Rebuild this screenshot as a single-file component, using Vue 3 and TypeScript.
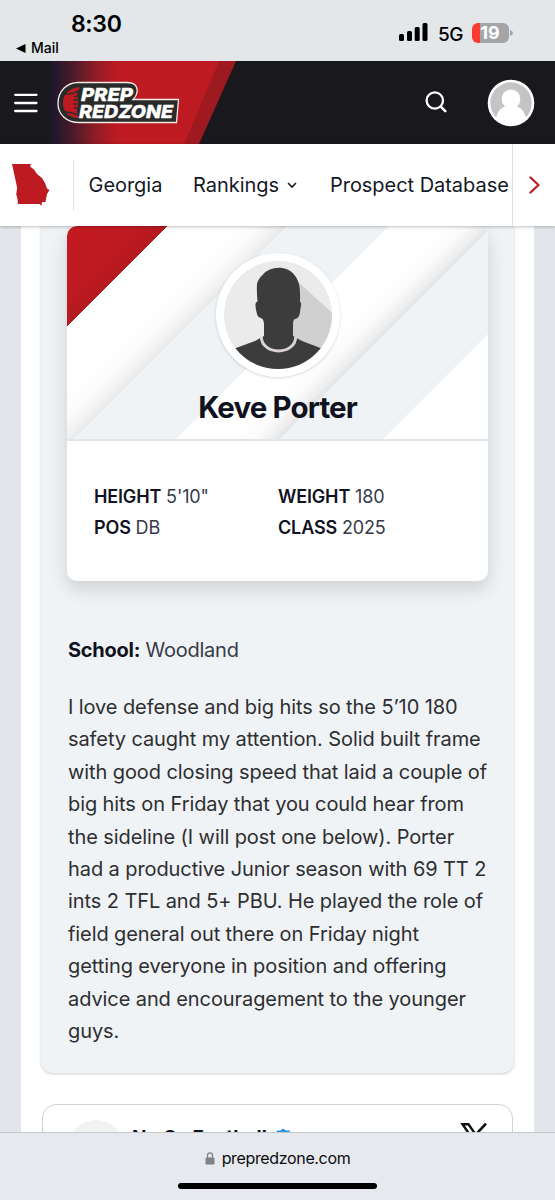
<script setup lang="ts">
interface Stat {
  label: string
  value: string
}

const stats: Stat[] = [
  { label: 'HEIGHT', value: '5\'10"' },
  { label: 'WEIGHT', value: '180' },
  { label: 'POS', value: 'DB' },
  { label: 'CLASS', value: '2025' },
]

const reportLines: string[] = [
  'I love defense and big hits so the 5’10 180',
  'safety caught my attention. Solid built frame',
  'with good closing speed that laid a couple of',
  'big hits on Friday that you could hear from',
  'the sideline (I will post one below). Porter',
  'had a productive Junior season with 69 TT 2',
  'ints 2 TFL and 5+ PBU. He played the role of',
  'field general out there on Friday night',
  'getting everyone in position and offering',
  'advice and encouragement to the younger',
  'guys.',
]
</script>

<template>
  <div class="phone">
    <div class="status">
      <div class="status-left">
        <div class="time">8:30</div>
        <div class="back">
          <svg width="10" height="9" viewBox="0 0 10 9"><path d="M9.500 0v9L0 4.500z" fill="#000" /></svg>
          <span>Mail</span>
        </div>
      </div>
      <div class="status-right">
        <svg class="signal" width="29" height="18" viewBox="0 0 29 18">
          <rect x="0" y="11" width="5" height="7" rx="1.500" />
          <rect x="8" y="8" width="5" height="10" rx="1.500" />
          <rect x="15.700" y="4" width="5" height="14" rx="1.500" />
          <rect x="23.500" y="0" width="5" height="18" rx="1.500" />
        </svg>
        <span class="net">5G</span>
        <div class="battery"><span>19</span></div>
        <svg class="cap" width="3" height="6" viewBox="0 0 3 6"><path d="M0 0Q3 1 3 3T0 6z" fill="#a3a5a8" /></svg>
      </div>
    </div>

    <header class="topbar">
      <svg class="topbar-art" width="240" height="83" viewBox="0 0 240 83">
        <defs>
          <linearGradient id="fade" x1="50" x2="118" y1="0" y2="0" gradientUnits="userSpaceOnUse">
            <stop offset="0" stop-color="#18172a" />
            <stop offset="0.300" stop-color="#461a2a" />
            <stop offset="0.700" stop-color="#951b25" />
            <stop offset="1" stop-color="#be1a21" />
          </linearGradient>
        </defs>
        <path d="M50 0H236L199 83H50z" fill="#9f1a20" />
        <path d="M50 0H219L184 83H50z" fill="url(#fade)" />
      </svg>
      <svg class="menu" width="24" height="20" viewBox="0 0 24 20">
        <path d="M1.200 1.800H22.500M1.200 10H22.500M1.200 18H22.500" stroke="#fff" stroke-width="2.300" stroke-linecap="round" />
      </svg>
      <svg class="logo" width="124" height="44" viewBox="0 0 124 44">
        <path
          d="M21 1.500H70C77 1.500 81 5 80 11.500Q79.500 15 76 18.500L121.500 18.500L119.500 41.500H22C9 41.500 1 33 1 22.500C1 10 10 1.500 21 1.500z"
          fill="#292b2b" stroke="#f5e9e6" stroke-width="1.300"
        />
        <path d="M23 6C11 7 6 14 6 22C6 31 12 37 22 37L20 31L21 22L20 13z" fill="#be1a21" />
        <path
          d="M7.500 13Q15 14 22 9.500M8 31Q14 31 21 34M20 15L17 16M20 19H16.500M20 23H16.500M20 27H17"
          fill="none" stroke="#292b2b" stroke-width="1.300"
        />
        <text x="24" y="19.600" class="logo-text" textLength="52" lengthAdjust="spacingAndGlyphs">PREP</text>
        <text x="22" y="36.600" class="logo-text" textLength="94" lengthAdjust="spacingAndGlyphs">REDZONE</text>
      </svg>
      <div class="grow"></div>
      <svg class="search" width="23" height="23" viewBox="0 0 23 23">
        <circle cx="9.800" cy="9.500" r="8.200" fill="none" stroke="#fff" stroke-width="2.300" />
        <path d="M15.800 15.700L20.300 20.200" stroke="#fff" stroke-width="2.600" stroke-linecap="round" />
      </svg>
      <svg class="user" width="48" height="48" viewBox="0 0 48 48">
        <defs><clipPath id="userclip"><circle cx="24" cy="24" r="21" /></clipPath></defs>
        <circle cx="24" cy="24" r="23.300" fill="#fff" />
        <circle cx="24" cy="24" r="20.700" fill="#c4c4c4" />
        <g clip-path="url(#userclip)" fill="#fff">
          <circle cx="24" cy="20" r="9.400" />
          <path d="M8 44Q10 28.500 20 27H28Q38 28.500 40 44L36 48H12z" />
        </g>
      </svg>
    </header>

    <nav class="subnav">
      <svg class="georgia" width="40" height="44" viewBox="0 0 40 44">
        <path
          d="M1 1L20 1L19 3.500L23 6.500L26 11L31 15L34 20L36 25.500L38.500 27L36 31L34.500 39L31 39L30.500 43L28.800 41L7 41L6.500 36L5.200 31L6.200 25z"
          fill="#be1a21"
        />
      </svg>
      <div class="nav-rule"></div>
      <span class="nav-item georgia-label">Georgia</span>
      <span class="nav-item rankings">Rankings</span>
      <svg class="chev" width="10" height="7" viewBox="0 0 10 7">
        <path d="M1.500 1.500L5 5L8.500 1.500" fill="none" stroke="#1b1f2b" stroke-width="1.700" stroke-linecap="round" />
      </svg>
      <span class="nav-item database">Prospect Database</span>
      <div class="nav-next">
        <svg width="12" height="18" viewBox="0 0 12 18">
          <path d="M1.500 1.500L9.500 9L1.500 16.500" fill="none" stroke="#be1a21" stroke-width="2.200" stroke-linecap="round" stroke-linejoin="round" />
        </svg>
      </div>
    </nav>

    <main class="page">
      <div class="column">
        <article class="panel">
          <section class="card">
            <div class="banner">
              <svg class="stripes" width="421" height="213" viewBox="0 0 421 213">
                <defs>
                  <linearGradient id="stripe" x1="0" y1="0" x2="300" y2="300" gradientUnits="userSpaceOnUse">
                    <stop offset="0" stop-color="#c41920" />
                    <stop offset="0.120" stop-color="#be1a21" />
                    <stop offset="0.167" stop-color="#b31a20" />
                    <stop offset="0.168" stop-color="#fff" />
                    <stop offset="0.285" stop-color="#fff" />
                    <stop offset="0.325" stop-color="#fafafa" />
                    <stop offset="0.352" stop-color="#f0f0f1" />
                    <stop offset="0.365" stop-color="#e8e9ea" />
                    <stop offset="0.367" stop-color="#eff3f6" />
                    <stop offset="0.536" stop-color="#eff3f6" />
                    <stop offset="0.538" stop-color="#fff" />
                    <stop offset="0.630" stop-color="#fff" />
                    <stop offset="0.668" stop-color="#fafafa" />
                    <stop offset="0.695" stop-color="#eeeeef" />
                    <stop offset="0.708" stop-color="#e3e4e5" />
                    <stop offset="0.710" stop-color="#eff3f6" />
                    <stop offset="0.881" stop-color="#eff3f6" />
                    <stop offset="0.883" stop-color="#fff" />
                  </linearGradient>
                </defs>
                <rect width="421" height="213" fill="url(#stripe)" />
              </svg>
              <svg class="portrait" width="124" height="124" viewBox="0 0 124 124">
                <defs><clipPath id="face"><circle cx="62" cy="62" r="54" /></clipPath></defs>
                <circle cx="62" cy="62" r="62" fill="#fff" />
                <g clip-path="url(#face)">
                  <rect width="124" height="124" fill="#ebebeb" />
                  <path d="M80 27L124 67V110L88 92L62 80z" fill="#d0d0d0" />
                  <path
                    d="M62.500 14.800C69 14.800 75 17.500 78 21.500C83 28 84.500 32 84 48.500Q86 50 84.500 55Q84 62.500 82 64.500Q80 66 78 66.500Q77 68 77 72V83L86 88L104.500 95L124 108V124H0V108L20 95L39 88L48 83V72Q48 67 46 65.500Q41.500 64 41 61Q38.500 52 40 49.500L41.500 48.500Q40.500 38 41 31Q42 26 47 21.500Q53 14.800 62.500 14.800z"
                    fill="#3c3c3c"
                  />
                  <path d="M45.300 84C46 102.500 79 102.500 79.800 84" fill="none" stroke="#dad4d5" stroke-width="3" />
                </g>
              </svg>
              <h1 class="name">Keve Porter</h1>
            </div>
            <div class="stats">
              <div v-for="s in stats" :key="s.label" class="stat"><b>{{ s.label }}</b> {{ s.value }}</div>
            </div>
          </section>
          <p class="school"><b>School:</b> Woodland</p>
          <p class="report"><span v-for="line in reportLines" :key="line">{{ line }}</span></p>
        </article>

        <section class="tweet">
          <div class="tweet-avatar"></div>
          <span class="tweet-name">NwGa Football</span>
          <svg class="verified" width="22" height="22" viewBox="0 0 22 22">
            <path d="M11 0.500L14 2.500L17.500 2.500L19 6L21.500 8.500L20.500 12L21 15L18 17.500L16 20.500L12.500 20L11 21.500L8 20.500L5 20L3.500 17L1 14.500L2 11L1 7.500L4 5.500L5 2.500L8.500 2.500z" fill="#2994e6" />
            <path d="M6 11L10 15L16 7" stroke="#fff" stroke-width="2" fill="none" />
          </svg>
          <svg class="x-mark" width="28" height="26" viewBox="0 0 28 26">
            <path d="M2.500 1.200H8.500L24.500 24.500H18.500z" fill="none" stroke="#111" stroke-width="2.400" />
            <path d="M26 0.500L14.500 13M12 15L3 25.500" stroke="#111" stroke-width="2.600" />
          </svg>
        </section>
      </div>
    </main>

    <footer class="browser">
      <div class="url">
        <svg width="10" height="13" viewBox="0 0 10 13">
          <path d="M2.500 6V3.500C2.500 0 7.500 0 7.500 3.500V6" fill="none" stroke="#808285" stroke-width="1.300" />
          <rect x="0.500" y="5.500" width="9" height="7" rx="1.200" fill="#808285" />
        </svg>
        <span>prepredzone.com</span>
      </div>
      <div class="home"></div>
    </footer>
  </div>
</template>

<style>
body {
  margin: 0;
  overflow: hidden;
}
</style>

<style scoped>
.phone {
  width: 555px;
  height: 1200px;
  overflow: hidden;
  display: flex;
  flex-direction: column;
  background: #e2e5e9;
  font-family: Inter, "Liberation Sans", sans-serif;
  color: #10131f;
}
.phone svg {
  display: block;
  flex: none;
}
.status {
  height: 61px;
  flex: none;
  display: flex;
  justify-content: space-between;
  background: #e3e7ea;
  color: #000;
}
.status-left {
  padding: 10px 0 0 16px;
}
.time {
  padding-left: 55px;
  font-size: 23px;
  line-height: 28px;
  font-weight: 600;
  letter-spacing: -0.35px;
}
.back {
  display: flex;
  align-items: center;
  gap: 5px;
  margin-top: 1px;
  font-size: 14px;
  line-height: 18px;
  font-weight: 500;
}
.status-right {
  display: flex;
  align-items: center;
  padding: 5px 42px 0 0;
}
.signal {
  margin-top: -2px;
}
.net {
  margin-left: 10px;
  width: 34px;
  margin-top: 2px;
  font-size: 19px;
  font-weight: 500;
  letter-spacing: -0.4px;
}
.battery {
  width: 37px;
  height: 20px;
  border-radius: 6px;
  background: linear-gradient(90deg, #fb3b30 8px, #a3a5a8 8px);
  color: #fff;
  font-size: 18px;
  line-height: 20px;
  font-weight: 700;
  text-align: center;
  box-sizing: border-box;
  padding-right: 1px;
}
.cap {
  margin-left: 1px;
}
.topbar {
  position: relative;
  height: 83px;
  flex: none;
  display: flex;
  align-items: center;
  background: #19181d;
}
.topbar-art {
  position: absolute;
  left: 0;
  top: 0;
}
.menu {
  position: relative;
  margin-left: 14px;
}
.logo {
  position: relative;
  margin-left: 19px;
}
.logo-text {
  font: italic 800 17.800px Inter, sans-serif;
  fill: #fff;
  stroke: #fff;
  stroke-width: 0.4px;
}
.grow {
  flex: 1;
}
.search {
  margin: -1px 39px 0 0;
}
.user {
  margin-right: 20px;
}
.subnav {
  position: relative;
  z-index: 2;
  height: 82px;
  flex: none;
  display: flex;
  align-items: center;
  background: #fff;
  box-shadow: 0 1px 3px rgba(0, 0, 0, 0.25);
  font-size: 20px;
}
.georgia {
  margin-left: 11px;
}
.nav-rule {
  width: 1px;
  height: 51px;
  margin-left: 22px;
  background: #dfe1e4;
}
.nav-item {
  white-space: nowrap;
  flex: none;
  color: #151825;
  letter-spacing: -0.04px;
}
.georgia-label {
  margin-left: 14.5px;
  width: 104.5px;
}
.rankings {
  width: 94px;
}
.database {
  margin-left: 33px;
  width: 182px;
}
.nav-next {
  display: flex;
  align-items: center;
  justify-content: center;
  width: 43px;
  height: 82px;
  margin-left: auto;
  box-sizing: border-box;
  border-left: 1px solid #dfe1e4;
}
.nav-next svg {
  margin-left: 2px;
}
.page {
  flex: none;
  height: 906px;
  overflow: hidden;
  padding: 0 21px;
}
.column {
  height: 906px;
  background: #fff;
  padding: 0 20px 0 20px;
}
.panel {
  height: 847px;
  box-sizing: border-box;
  padding: 0 26px 0 26px;
  border-radius: 0 0 12px 12px;
  background: #eff3f6;
  box-shadow: 0 1px 3px rgba(0, 0, 0, 0.2);
}
.card {
  width: 421px;
  height: 355px;
  border-radius: 10px;
  overflow: hidden;
  background: #fff;
  box-shadow: 0 8px 18px rgba(0, 0, 0, 0.14);
}
.banner {
  position: relative;
  height: 213px;
  border-bottom: 2px solid #e3e5e9;
  display: flex;
  flex-direction: column;
  align-items: center;
}
.stripes {
  position: absolute;
  inset: 0;
}
.portrait {
  position: relative;
  margin-top: 26.5px;
  border-radius: 50%;
  box-shadow: 0 1px 3px rgba(0, 0, 0, 0.16);
}
.name {
  position: relative;
  margin: 12.5px 0 0;
  font-size: 29.5px;
  line-height: 36px;
  font-weight: 700;
  letter-spacing: -0.9px;
}
.stats {
  display: grid;
  grid-template-columns: 184px 1fr;
  padding: 40px 26px 0 27px;
  font-size: 18px;
  line-height: 31px;
  letter-spacing: -0.15px;
  color: #363a48;
}
.stat b {
  font-weight: 600;
  color: #10131f;
}
.school {
  margin: 53px 0 0 1px;
  font-size: 20px;
  line-height: 32px;
  letter-spacing: -0.25px;
  color: #363a48;
}
.school b {
  font-weight: 700;
  color: #10131f;
}
.report {
  margin: 25px 0 0 1px;
  font-size: 20px;
  line-height: 32.4px;
  letter-spacing: -0.09px;
  color: #2e2e30;
}
.report span {
  display: block;
  white-space: nowrap;
}
.tweet {
  margin: 31px 1px 0 1px;
  height: 140px;
  box-sizing: border-box;
  border: 1px solid #ccd3d9;
  border-radius: 14px;
  display: flex;
  align-items: flex-start;
  padding: 15px 24px 0 26px;
}
.tweet-avatar {
  width: 54px;
  height: 54px;
  border-radius: 50%;
  background: #f2f2f3;
}
.tweet-name {
  margin: 6px 0 0 9px;
  width: 140px;
  font-size: 19px;
  line-height: 24px;
  font-weight: 700;
  white-space: nowrap;
}
.verified {
  margin-top: 8px;
}
.x-mark {
  margin: 3px 0 0 auto;
}
.browser {
  position: relative;
  z-index: 2;
  height: 68px;
  flex: none;
  box-sizing: border-box;
  border-top: 1px solid #c6c9cc;
  background: #e6e9ed;
  display: flex;
  flex-direction: column;
  align-items: center;
}
.url {
  display: flex;
  align-items: center;
  gap: 7px;
  margin-top: 14px;
  height: 22px;
  font-size: 16px;
  letter-spacing: -0.35px;
  color: #0c0c0e;
}
.home {
  width: 199px;
  height: 6px;
  margin-top: 14px;
  border-radius: 3px;
  background: #000;
}
</style>
